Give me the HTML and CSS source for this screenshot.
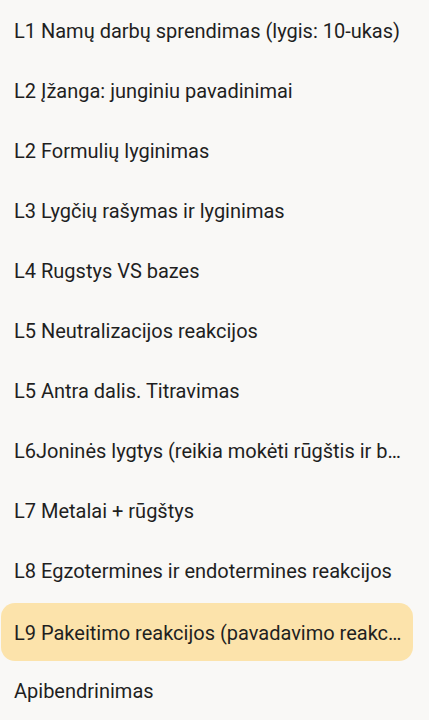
FILE: index.html
```html
<!DOCTYPE html>
<html lang="lt">
<head>
<meta charset="utf-8">
<link rel="stylesheet" href="styles.css">
</head>
<body>
<ul class="list">
  <li class="item">L1 Namų darbų sprendimas (lygis: 10-ukas)</li>
  <li class="item">L2 Įžanga: junginiu pavadinimai</li>
  <li class="item">L2 Formulių lyginimas</li>
  <li class="item">L3 Lygčių rašymas ir lyginimas</li>
  <li class="item">L4 Rugstys VS bazes</li>
  <li class="item">L5 Neutralizacijos reakcijos</li>
  <li class="item">L5 Antra dalis. Titravimas</li>
  <li class="item">L6Joninės lygtys (reikia mokėti rūgštis ir bazes)</li>
  <li class="item">L7 Metalai + rūgštys</li>
  <li class="item">L8 Egzotermines ir endotermines reakcijos</li>
  <li class="item active">L9 Pakeitimo reakcijos (pavadavimo reakcijos)</li>
  <li class="item">Apibendrinimas</li>
</ul>
</body>
</html>
```

FILE: styles.css
```css
html, body {
  margin: 0;
  padding: 0;
  background: #f9f8f6;
}
body {
  font-family: Roboto, "Noto Sans", sans-serif;
  color: #1f1f1f;
}
.list {
  list-style: none;
  margin: 0;
  padding: 1px 0 0 1px;
  width: 412px;
}
.item {
  height: 60px;
  line-height: 60px;
  padding: 0 10px 0 13px;
  font-size: 20px;
  white-space: nowrap;
  overflow: hidden;
  text-overflow: ellipsis;
  border-radius: 14px;
}
.item.active {
  margin-top: 2px;
  height: 58px;
  background: #fce3ab;
}
```
